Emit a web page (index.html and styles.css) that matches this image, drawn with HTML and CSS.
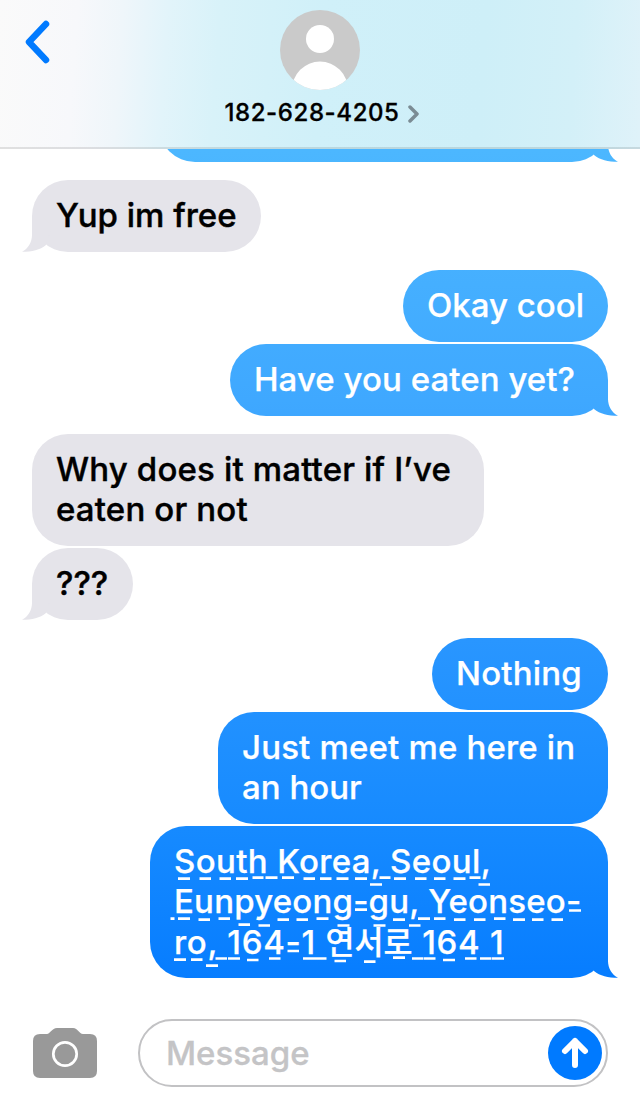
FILE: index.html
```html
<!DOCTYPE html>
<html lang="en">
<head>
<meta charset="utf-8">
<title>Messages</title>
<link rel="stylesheet" href="styles.css">
</head>
<body>
<div class="phone">
  <header class="header">
    <svg class="back" viewBox="0 0 28 46"><path d="M22 5L5 23L22 41"/></svg>
    <div class="contact">
      <svg class="avatar" viewBox="0 0 80 80"><defs><clipPath id="face"><circle cx="40" cy="40" r="40"/></clipPath></defs><circle cx="40" cy="40" r="40" fill="#cacaca"/><g clip-path="url(#face)" fill="#fff"><circle cx="40" cy="29" r="14"/><ellipse cx="40" cy="80" rx="28" ry="28.5"/></g></svg>
      <div class="number"><span class="digits">182-628-4205</span><svg class="more" viewBox="0 0 12 20"><path d="M2 3L9 10L2 17"/></svg></div>
    </div>
  </header>
  <main class="thread">
    <div class="group sent first"><div class="bubble earlier tail"></div></div>
    <div class="group received"><div class="bubble w-yup tail"><span class="line l-yup">Yup im free</span></div></div>
    <div class="group sent">
      <div class="bubble w-okay"><span class="line l-okay">Okay cool</span></div>
      <div class="bubble w-have tail"><span class="line l-have">Have you eaten yet?</span></div>
    </div>
    <div class="group received">
      <div class="bubble w-why"><span class="line l-why">Why does it matter if I’ve</span><span class="line l-eaten">eaten or not</span></div>
      <div class="bubble w-q tail"><span class="line l-q">???</span></div>
    </div>
    <div class="group sent">
      <div class="bubble w-nothing"><span class="line l-nothing">Nothing</span></div>
      <div class="bubble w-just"><span class="line l-just">Just meet me here in</span><span class="line l-an">an hour</span></div>
      <div class="bubble w-addr tail"><span class="line l-a1">South Korea, Seoul,</span><span class="line l-a2">Eunpyeong-gu, Yeonseo-</span><span class="line l-a3">ro, 164-1 <span class="ko">연서로</span> 164 1</span>
        <svg class="marks" viewBox="150 826 458 152"><path d="M178 878.7h12M199.5 878.7h11.5M219.5 878.7h11.5M236 878.7h12M252.5 877.7h11M265.5 877.7h12M282 877.7h12M303.5 878.7h11.5M320 878.7h11.5M336.5 878.7h12M355 878.7h12M370 884.5h12M379.500 877.7h11M394 878.7h12M415 878.7h11.5M434 878.7h11.5M453.500 878.7h12M469.500 877.7h11M478.500 884.5h11.5M170.500 918.7h4M178 918.7h12M198.500 919.7h11.5M218.500 918.7h11.5M238.500 924.7h11.5M258.500 925.5h11.5M277.500 919.7h11.5M296.500 919.7h11.5M316.500 918.7h12M337.500 925.5h12M355 909.7h12M373.500 925.5h12M393 919.7h12M409 925.5h11.5M418 918.7h12M434 918.7h11.5M454 919.7h11.5M474 919.7h11.5M494 918.7h11.5M513 919.7h12M532 919.7h11.5M551.500 919.7h11.5M569 910.500h12M174 959.7h12M191 959.7h11.5M206 965.7h12M215.500 958.5h11.5M228 958.5h12M247 960h11.5M269 958.5h11.5M287.500 951h11.5M303 958.5h12M315 958.5h11.5M334.500 961h11.5M364 961.7h11.5M393 957.7h12M412 958.5h11.5M424 958.5h11.5M443 960h12M465 958.5h11.5M480 958.5h11.5M492 958.5h12"/></svg>
      </div>
    </div>
  </main>
  <footer class="composer">
    <svg class="camera" viewBox="0 0 64 50"><path fill="#999" d="M7 6H14C17 6 19 0 24 0H40C45 0 46 6 50 6H57Q64 6 64 13V43Q64 50 57 50H7Q0 50 0 43V13Q0 6 7 6Z"/><circle cx="32" cy="26" r="11.700" fill="none" stroke="#fff" stroke-width="2.700"/></svg>
    <div class="field"><span class="placeholder">Message</span>
      <svg class="send" viewBox="0 0 54 54"><circle cx="27" cy="27" r="27"/><path d="M27 39V15M17 25L27 15L37 25"/></svg>
    </div>
  </footer>
</div>
</body>
</html>
```
FILE: styles.css
```css
* { box-sizing: border-box; }
body { margin: 0; background: #fff; font-family: Inter, "Noto Sans CJK KR", sans-serif; }
svg { display: block; flex: none; }
.phone { width: 640px; height: 1098px; display: flex; flex-direction: column; overflow: hidden; }
.header {
  height: 149px; flex: none; display: grid; grid-template-columns: 1fr 240px 1fr;
  padding-top: 10px; border-bottom: 2px solid rgba(0, 0, 0, .1);
  background: linear-gradient(94deg, #fafafa 0%, #f7f8fb 12%, #eff6fa 19%, #e2f4fa 26%, #d8f2f9 34%, #d0f0f9 50%, #ceeff8 75%, #d3f0f8 89%, #dff2f9 100%);
}
.back { width: 28px; height: 46px; margin: 9px 0 0 24px; fill: none; stroke: #007aff; stroke-width: 6.500; stroke-linecap: round; stroke-linejoin: round; }
.contact { display: flex; flex-direction: column; align-items: center; }
.avatar { width: 80px; height: 80px; }
.number { display: flex; align-items: center; gap: 8px; margin: 7px 0 0 4px; height: 30px; font-size: 24px; font-weight: 500; letter-spacing: .6px; white-space: nowrap; color: #000; -webkit-text-stroke: .3px currentColor; }
.more { width: 12px; height: 20px; margin-top: 4px; fill: none; stroke: #7b8c94; stroke-width: 3.500; stroke-linecap: round; stroke-linejoin: round; }
.thread { height: 850px; flex: none; padding: 0 32px; display: flex; flex-direction: column; gap: 18px; overflow: hidden; }
.group { display: flex; flex-direction: column; gap: 2px; align-items: flex-start; }
.sent { align-items: flex-end; }
.bubble { position: relative; padding: 15px 0 17px 24px; border-radius: 36px; font-size: 33px; line-height: 40px; font-weight: 500; background: #e5e4ea; color: #000; -webkit-text-stroke: .4px currentColor; }
.sent .bubble, .sent .tail::after { background: linear-gradient(#4cb7ff 150px, #3fa8ff 400px, #2996ff 640px, #168aff 830px, #077dff 978px) fixed; color: #fff; }
.sent .bubble { -webkit-text-stroke-width: .25px; }
.first { margin-top: -59px; }
.earlier { width: 449px; height: 72px; }
.tail::after { content: ""; position: absolute; bottom: 0; width: 30px; height: 36px; clip-path: path("M10 0H20V19C20 26 24 33 30 35.8C20 35.8 12 34 6 29L0 10Z"); }
.sent .tail::after { right: -10px; }
.received .tail::after { left: -10px; background: #e5e4ea; transform: scaleX(-1); }
.line { display: block; height: 40px; white-space: nowrap; }
.l-have { letter-spacing: .05px; }
.l-why, .l-eaten { letter-spacing: .16px; }
.l-just { letter-spacing: .17px; }
.l-nothing { letter-spacing: .2px; }
.l-a1 { letter-spacing: .36px; }
.l-a2 { letter-spacing: .2px; }
.l-a3 { letter-spacing: .7px; padding-top: 1px; }
.w-yup { width: 229px; } .w-okay { width: 205px; } .w-have { width: 378px; }
.w-why { width: 452px; } .w-q { width: 101px; } .w-nothing { width: 176px; }
.w-just { width: 390px; } .w-addr { width: 458px; }
.ko { font-family: "Noto Sans CJK KR", sans-serif; font-size: 31.5px; line-height: 1; letter-spacing: .1px; }
.marks { position: absolute; inset: 0; width: 458px; height: 152px; z-index: 1; fill: none; stroke: #fff; stroke-width: 2.700; }
.composer { display: flex; align-items: flex-start; padding: 20px 32px 0 33px; }
.camera { width: 64px; height: 50px; margin: 9px 41px 0 0; }
.field { width: 470px; height: 68px; border: 2px solid #c2c2c4; border-radius: 34px; display: flex; align-items: center; justify-content: space-between; padding: 0 4px 0 26px; }
.placeholder { font-size: 33px; font-weight: 500; color: #c4c4c6; -webkit-text-stroke: .3px currentColor; }
.send { width: 54px; height: 54px; fill: #007aff; }
.send path { fill: none; stroke: #fff; stroke-width: 6; stroke-linecap: round; stroke-linejoin: round; }
```
